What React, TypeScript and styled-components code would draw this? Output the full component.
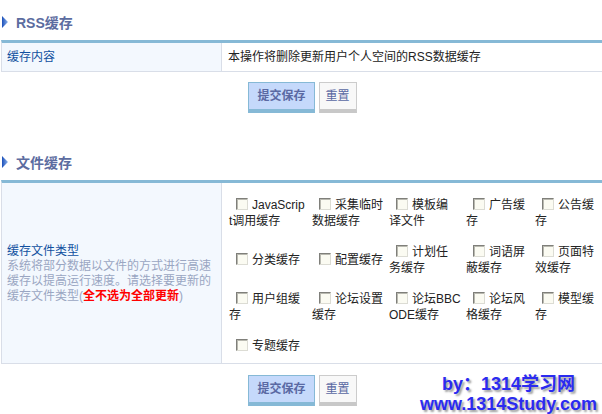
import React from "react";
import styled, { createGlobalStyle } from "styled-components";

const GlobalStyle = createGlobalStyle`
  html, body {
    margin: 0;
    padding: 0;
    background: #ffffff;
    overflow: hidden;
  }
  body {
    font-family: "Liberation Sans", "Noto Sans CJK SC", sans-serif;
    font-size: 12px;
    color: #222;
  }
`;

const Page = styled.div`
  position: relative;
  width: 602px;
  height: 414px;
  overflow: hidden;
`;

const Section = styled.section<{ $top: number }>`
  margin-top: ${(p) => p.$top}px;
`;

const Title = styled.h3`
  display: flex;
  align-items: center;
  gap: 8px;
  height: 20px;
  margin: 0 0 8px;
  padding-left: 2px;
  font-size: 14px;
  font-weight: bold;
  color: #5c6ca0;
`;

const FormTable = styled.div`
  margin-left: 1px;
  width: 603px;
  border-top: 3px solid #86b9d6;
  border-left: 1px solid #d9dee8;
  border-bottom: 1px solid #d9dee8;
`;

const Row = styled.div`
  display: grid;
  grid-template-columns: 220px 1fr;
`;

const LabelCell = styled.div`
  display: flex;
  flex-direction: column;
  justify-content: center;
  padding: 6px 6px 6px 5px;
  background: #f3f8fe;
  border-right: 1px solid #d9dee8;
  line-height: 16px;
`;

const Label = styled.div`
  color: #1050a0;
`;

const Desc = styled.div`
  color: #9aa6c2;
  line-height: 15px;
`;

const Warn = styled.strong`
  color: #ff0000;
`;

const ValueCell = styled.div`
  padding: 6px 5px 6px 6px;
  line-height: 16px;
  color: #222;
`;

const OptionGrid = styled.div`
  display: grid;
  grid-template-columns: 83px 77px 77px 69px 1fr;
  padding: 7px 0 1px 7px;
`;

const Option = styled.label`
  display: flex;
  flex-direction: column;
  justify-content: center;
  padding: 7px 0 8px;
  line-height: 16px;
  color: #222;
  white-space: nowrap;
`;

const Check = styled.input`
  appearance: none;
  box-sizing: border-box;
  width: 12px;
  height: 12px;
  margin: 0 4px 0 7px;
  vertical-align: -1px;
  border: 1px solid;
  border-color: #7f7f7a #dcdcd4 #dcdcd4 #7f7f7a;
  background: #fbfbf2;
  box-shadow: inset 1px 1px 0 #b9b9b0;
`;

const ButtonBar = styled.div<{ $top: number }>`
  display: flex;
  justify-content: center;
  gap: 4px;
  margin-top: ${(p) => p.$top}px;
  padding-left: 3px;
`;

const Button = styled.button<{ $primary?: boolean }>`
  height: 31px;
  padding: 0 ${(p) => (p.$primary ? 8 : 6)}px;
  font-family: "Liberation Sans", "Noto Sans CJK SC", sans-serif;
  font-size: 12px;
  line-height: 25px;
  font-weight: ${(p) => (p.$primary ? "bold" : "normal")};
  color: #5a69a3;
  background: ${(p) => (p.$primary ? "#c5d9fb" : "#f8f8f8")};
  border: 1px solid ${(p) => (p.$primary ? "#86b9d6" : "#cccccc")};
  border-bottom-width: 4px;
  border-bottom-color: ${(p) => (p.$primary ? "#86b9d6" : "#c8c8c8")};
  cursor: pointer;
`;

const Watermark = styled.div`
  position: absolute;
  right: 5px;
  bottom: 0;
  text-align: center;
  font-family: "Liberation Sans", "Noto Sans CJK SC", sans-serif;
  font-size: 18px;
  font-weight: bold;
  line-height: 20px;
  color: #2b2bf0;
  text-shadow: 2px 2px 2px #a0a0a0;
`;

const Arrow = () => (
  <svg width="6" height="12" viewBox="0 0 6 12">
    <defs>
      <linearGradient id="arrowGrad" x1="0" y1="0" x2="1" y2="0">
        <stop offset="0" stopColor="#1c4fb8" />
        <stop offset="1" stopColor="#8db4ee" />
      </linearGradient>
    </defs>
    <polygon points="0,0 6,6 0,12" fill="url(#arrowGrad)" />
  </svg>
);

const options: string[][] = [
  ["JavaScrip", "t调用缓存"],
  ["采集临时", "数据缓存"],
  ["模板编", "译文件"],
  ["广告缓", "存"],
  ["公告缓", "存"],
  ["分类缓存"],
  ["配置缓存"],
  ["计划任", "务缓存"],
  ["词语屏", "蔽缓存"],
  ["页面特", "效缓存"],
  ["用户组缓", "存"],
  ["论坛设置", "缓存"],
  ["论坛BBC", "ODE缓存"],
  ["论坛风", "格缓存"],
  ["模型缓", "存"],
  ["专题缓存"],
];

const App = () => {
  return (
    <Page>
      <GlobalStyle />
      <Section $top={12}>
        <Title>
          <Arrow />
          RSS缓存
        </Title>
        <FormTable>
          <Row>
            <LabelCell>
              <Label>缓存内容</Label>
            </LabelCell>
            <ValueCell>本操作将删除更新用户个人空间的RSS数据缓存</ValueCell>
          </Row>
        </FormTable>
        <ButtonBar $top={10}>
          <Button $primary>提交保存</Button>
          <Button>重置</Button>
        </ButtonBar>
      </Section>

      <Section $top={39}>
        <Title>
          <Arrow />
          文件缓存
        </Title>
        <FormTable>
          <Row>
            <LabelCell>
              <Label>缓存文件类型</Label>
              <Desc>
                系统将部分数据以文件的方式进行高速缓存以提高运行速度。请选择要更新的缓存文件类型(<Warn>全不选为全部更新</Warn>)
              </Desc>
            </LabelCell>
            <OptionGrid>
              {options.map((lines, i) => (
                <Option key={i}>
                  <span>
                    <Check type="checkbox" />
                    {lines[0]}
                  </span>
                  {lines[1] && <span>{lines[1]}</span>}
                </Option>
              ))}
            </OptionGrid>
          </Row>
        </FormTable>
        <ButtonBar $top={11}>
          <Button $primary>提交保存</Button>
          <Button>重置</Button>
        </ButtonBar>
      </Section>

      <Watermark>
        by：1314学习网
        <br />
        www.1314Study.com
      </Watermark>
    </Page>
  );
};

export default App;
